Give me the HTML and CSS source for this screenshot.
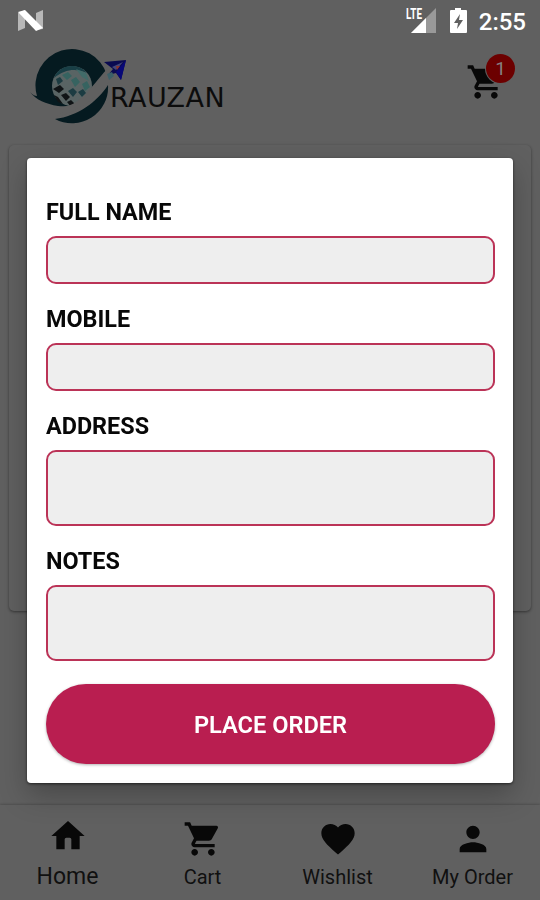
FILE: index.html
```
<!DOCTYPE html>
<html lang="en">
<head>
    <meta charset="UTF-8">
    <meta name="viewport" content="width=device-width, initial-scale=1.0">
    <title>Rauzan - Place Order</title>
    <link rel="stylesheet" href="styles.css">
</head>
<body>
    <div class="screen">
        <div class="status-bar">
            <svg class="status-logo" width="28" height="24" viewBox="0 0 28 24">
                <path d="M1 4L8 1V19L1 22Z" fill="#b8b8b8"/>
                <path d="M19 4L26 1V20L19 21Z" fill="#b8b8b8"/>
                <path d="M1 3L8 1L26 19L19 22Z" fill="#fff"/>
            </svg>
            <div class="status-right">
                <svg width="62" height="28" viewBox="0 0 62 28">
                    <path d="M30 1V26H5Z" fill="#999"/>
                    <path d="M20 11V26H5Z" fill="#fff"/>
                    <path d="M0 0H17V10L14 13H0Z" fill="#606060"/>
                    <text class="lte" x="0" y="12" textLength="16" lengthAdjust="spacingAndGlyphs">LTE</text>
                    <path d="M49 1H55V3H60Q61 3 61 4V25Q61 26 60 26H45Q44 26 44 25V4Q44 3 45 3H49Z" fill="#fff"/>
                    <path d="M54 7L48 16H52L51 22L57 13H53Z" fill="#606060"/>
                </svg>
                <span class="clock">2:55</span>
            </div>
        </div>

        <div class="header">
            <div class="logo">
                <svg width="102" height="80" viewBox="0 0 102 80">
                    <!-- ring -->
                    <path d="M2 47C5 50 7 51 9 51A36 36 0 0 1 79 30C72 33 68 38 63 44L52 57C46 61 38 62 30 61C18 59 8 55 2 47Z" fill="#051a20"/>
                    <path d="M27 74C50 71 69 57 80 40A36 36 0 0 1 27 74Z" fill="#051a20"/>
                    <!-- globe -->
                    <circle cx="44" cy="41" r="20" fill="#596464"/>
                    <path d="M26 33C32 18 51 18 59 28C48 23 37 24 26 33Z" fill="#193f46"/>
                    <path d="M48 24L58 28L61 36L54 32Z" fill="#416b69"/>
                    <path d="M34 30l6-3 4 4-5 4zM43 35l5-3 4 5-5 5zM54 39l5-3 3 6-5 4z" fill="#366360"/>
                    <path d="M28 34l4-2 3 4-5 4zM40 46l5-3 4 4-4 5zM50 47l5-3 3 4-4 4z" fill="#1c3c42"/>
                    <path d="M25 44l7-4 4 4-5 4zM33 50l5-2 4 4-4 4zM26 50l4 2 5 7-5-2zM39 57l4-2 4 4-4 3z" fill="#101416"/>
                    <!-- plane trail -->
                    <path d="M36 62C54 58 62 43 79 24L86 29C74 49 57 64 27 73C33 69 37 65 36 62Z" fill="#606060"/>
                    <path d="M76 17L98 15L93 35L88 28L80 30L85 24Z" fill="#0a0a50"/>
                    <path d="M98 15L93 35L88 27Z" fill="#080878"/>
                    <path d="M84 22L95 17L88 25Z" fill="#44477a"/>
                    <path d="M88 21l4 0-3 4z" fill="#87352f"/>
                    <path d="M79 29l5-2 2 4-5 4z" fill="#3c6068"/>
                </svg>
                <span class="logo-text">RAUZAN</span>
            </div>
            <div class="header-cart">
                <svg class="icon" viewBox="0 0 24 24">
                    <path d="M7 18c-1.1 0-1.99.9-1.99 2S5.9 22 7 22s2-.9 2-2-.9-2-2-2zM1 2v2h2l3.6 7.59-1.35 2.45c-.16.28-.25.61-.25.96 0 1.1.9 2 2 2h12v-2H7.42c-.14 0-.25-.11-.25-.25l.03-.12.9-1.63h7.45c.75 0 1.41-.41 1.75-1.03l3.58-6.49A1 1 0 0 0 20 4H5.21l-.94-2H1zm16 16c-1.1 0-1.99.9-1.99 2s.89 2 1.99 2 2-.9 2-2-.9-2-2-2z"/>
                </svg>
                <span class="badge">1</span>
            </div>
        </div>

        <div class="card"></div>

        <div class="bottom-nav">
            <div class="nav-item active">
                <svg class="icon" viewBox="0 0 24 24"><path d="M10 20v-6q0-1 1-1h2q1 0 1 1v6h5v-8h3L12 3 2 12h3v8z"/></svg>
                <span>Home</span>
            </div>
            <div class="nav-item">
                <svg class="icon" viewBox="0 0 24 24">
                    <path d="M7 18c-1.1 0-1.99.9-1.99 2S5.9 22 7 22s2-.9 2-2-.9-2-2-2zM1 2v2h2l3.6 7.59-1.35 2.45c-.16.28-.25.61-.25.96 0 1.1.9 2 2 2h12v-2H7.42c-.14 0-.25-.11-.25-.25l.03-.12.9-1.63h7.45c.75 0 1.41-.41 1.75-1.03l3.58-6.49A1 1 0 0 0 20 4H5.21l-.94-2H1zm16 16c-1.1 0-1.99.9-1.99 2s.89 2 1.99 2 2-.9 2-2-.9-2-2-2z"/>
                </svg>
                <span>Cart</span>
            </div>
            <div class="nav-item">
                <svg class="icon" viewBox="0 0 24 24"><path d="M12 21.35l-1.45-1.32C5.4 15.36 2 12.28 2 8.5 2 5.42 4.42 3 7.5 3c1.74 0 3.41.81 4.5 2.09C13.09 3.81 14.76 3 16.5 3 19.58 3 22 5.42 22 8.5c0 3.78-3.4 6.86-8.55 11.54L12 21.35z"/></svg>
                <span>Wishlist</span>
            </div>
            <div class="nav-item">
                <svg class="icon" viewBox="0 0 24 24"><path d="M12 12c2.21 0 4-1.79 4-4s-1.79-4-4-4-4 1.79-4 4 1.79 4 4 4zm0 2c-2.67 0-8 1.34-8 4v2h16v-2c0-2.66-5.33-4-8-4z"/></svg>
                <span>My Order</span>
            </div>
        </div>
    </div>

    <!-- Order dialog -->
    <div class="overlay">
        <form class="dialog">
            <label for="name">FULL NAME</label>
            <input type="text" id="name">
            <label for="mobile">MOBILE</label>
            <input type="tel" id="mobile">
            <label for="address">ADDRESS</label>
            <textarea id="address"></textarea>
            <label for="notes">NOTES</label>
            <textarea id="notes"></textarea>
            <button type="button" class="order-button">PLACE ORDER</button>
        </form>
    </div>
</body>
</html>
```
FILE: styles.css
```
* {
    margin: 0;
    padding: 0;
    box-sizing: border-box;
    font-family: Roboto, "Liberation Sans", sans-serif;
}

body {
    background: #606060;
    overflow: hidden;
}

.screen {
    display: flex;
    flex-direction: column;
    height: 100vh;
}

.status-bar {
    display: flex;
    justify-content: space-between;
    height: 44px;
    padding: 7px 14px 0 17px;
}

.status-logo {
    margin-top: 2px;
}

.status-right {
    display: flex;
    gap: 11px;
}

.lte {
    font-size: 14px;
    font-weight: 700;
    fill: #fff;
}

.clock {
    color: #fff;
    font-size: 24px;
    font-weight: 500;
    line-height: 30px;
}

.header {
    display: flex;
    justify-content: space-between;
    height: 101px;
    padding: 0 34px 0 28px;
}

.logo {
    display: flex;
}

.logo svg {
    margin-top: 1px;
}

.logo-text {
    margin: 37px 0 0 -20px;
    color: #0c0c0c;
    font-family: "DejaVu Sans", sans-serif;
    font-size: 27px;
    letter-spacing: 0.4px;
    line-height: 34px;
}

.icon {
    display: block;
    width: 40px;
    height: 40px;
    fill: #080808;
}

.header-cart {
    position: relative;
    margin-top: 18px;
    height: 40px;
}

/* outline keeps the badge apart from the cart */
.badge {
    position: absolute;
    top: -8px;
    right: -9px;
    width: 29px;
    height: 29px;
    border-radius: 50%;
    background: #6c0000;
    box-shadow: 0 0 0 1px #606060;
    color: #858080;
    font-size: 19px;
    line-height: 30px;
    text-align: center;
}

.card {
    height: 466px;
    margin: 0 9px;
    border-radius: 5px;
    background: #606060;
    box-shadow: 0 1px 3px rgba(0, 0, 0, 0.45);
}

.bottom-nav {
    display: flex;
    height: 95px;
    margin-top: auto;
    background: #606060;
    box-shadow: 0 -1px 2px rgba(0, 0, 0, 0.2);
}

.nav-item {
    flex: 1;
    display: flex;
    flex-direction: column;
    align-items: center;
    padding-top: 14px;
    color: #101010;
    font-size: 20px;
    line-height: 24px;
}

.nav-item span {
    margin-top: 6px;
}

.nav-item.active {
    padding-top: 11px;
    font-size: 23px;
}

.nav-item.active span {
    margin-top: 9px;
}

.overlay {
    position: fixed;
    inset: 0;
    padding: 158px 27px 0;
}

.dialog {
    display: flex;
    flex-direction: column;
    height: 625px;
    padding: 40px 18px 0 19px;
    border-radius: 4px;
    background: #fff;
    box-shadow: 0 1px 3px rgba(0, 0, 0, 0.6), 0 12px 28px rgba(0, 0, 0, 0.25);
}

.dialog label {
    color: #080808;
    font-size: 23.4px;
    font-weight: 700;
    line-height: 28px;
}

.dialog input,
.dialog textarea {
    width: 100%;
    margin: 10px 0 21px;
    border: 2px solid #bb3357;
    border-radius: 10px;
    background: #eee;
    outline: none;
    resize: none;
}

.dialog input {
    height: 48px;
}

.dialog textarea {
    height: 76px;
}

.order-button {
    height: 80px;
    margin-top: 2px;
    border: none;
    border-radius: 40px;
    background: #b91e50;
    color: #fff;
    font-size: 23.6px;
    font-weight: 600;
    line-height: 28px;
    padding-top: 2px;
    box-shadow: 0 1px 3px rgba(0, 0, 0, 0.3);
}
```
